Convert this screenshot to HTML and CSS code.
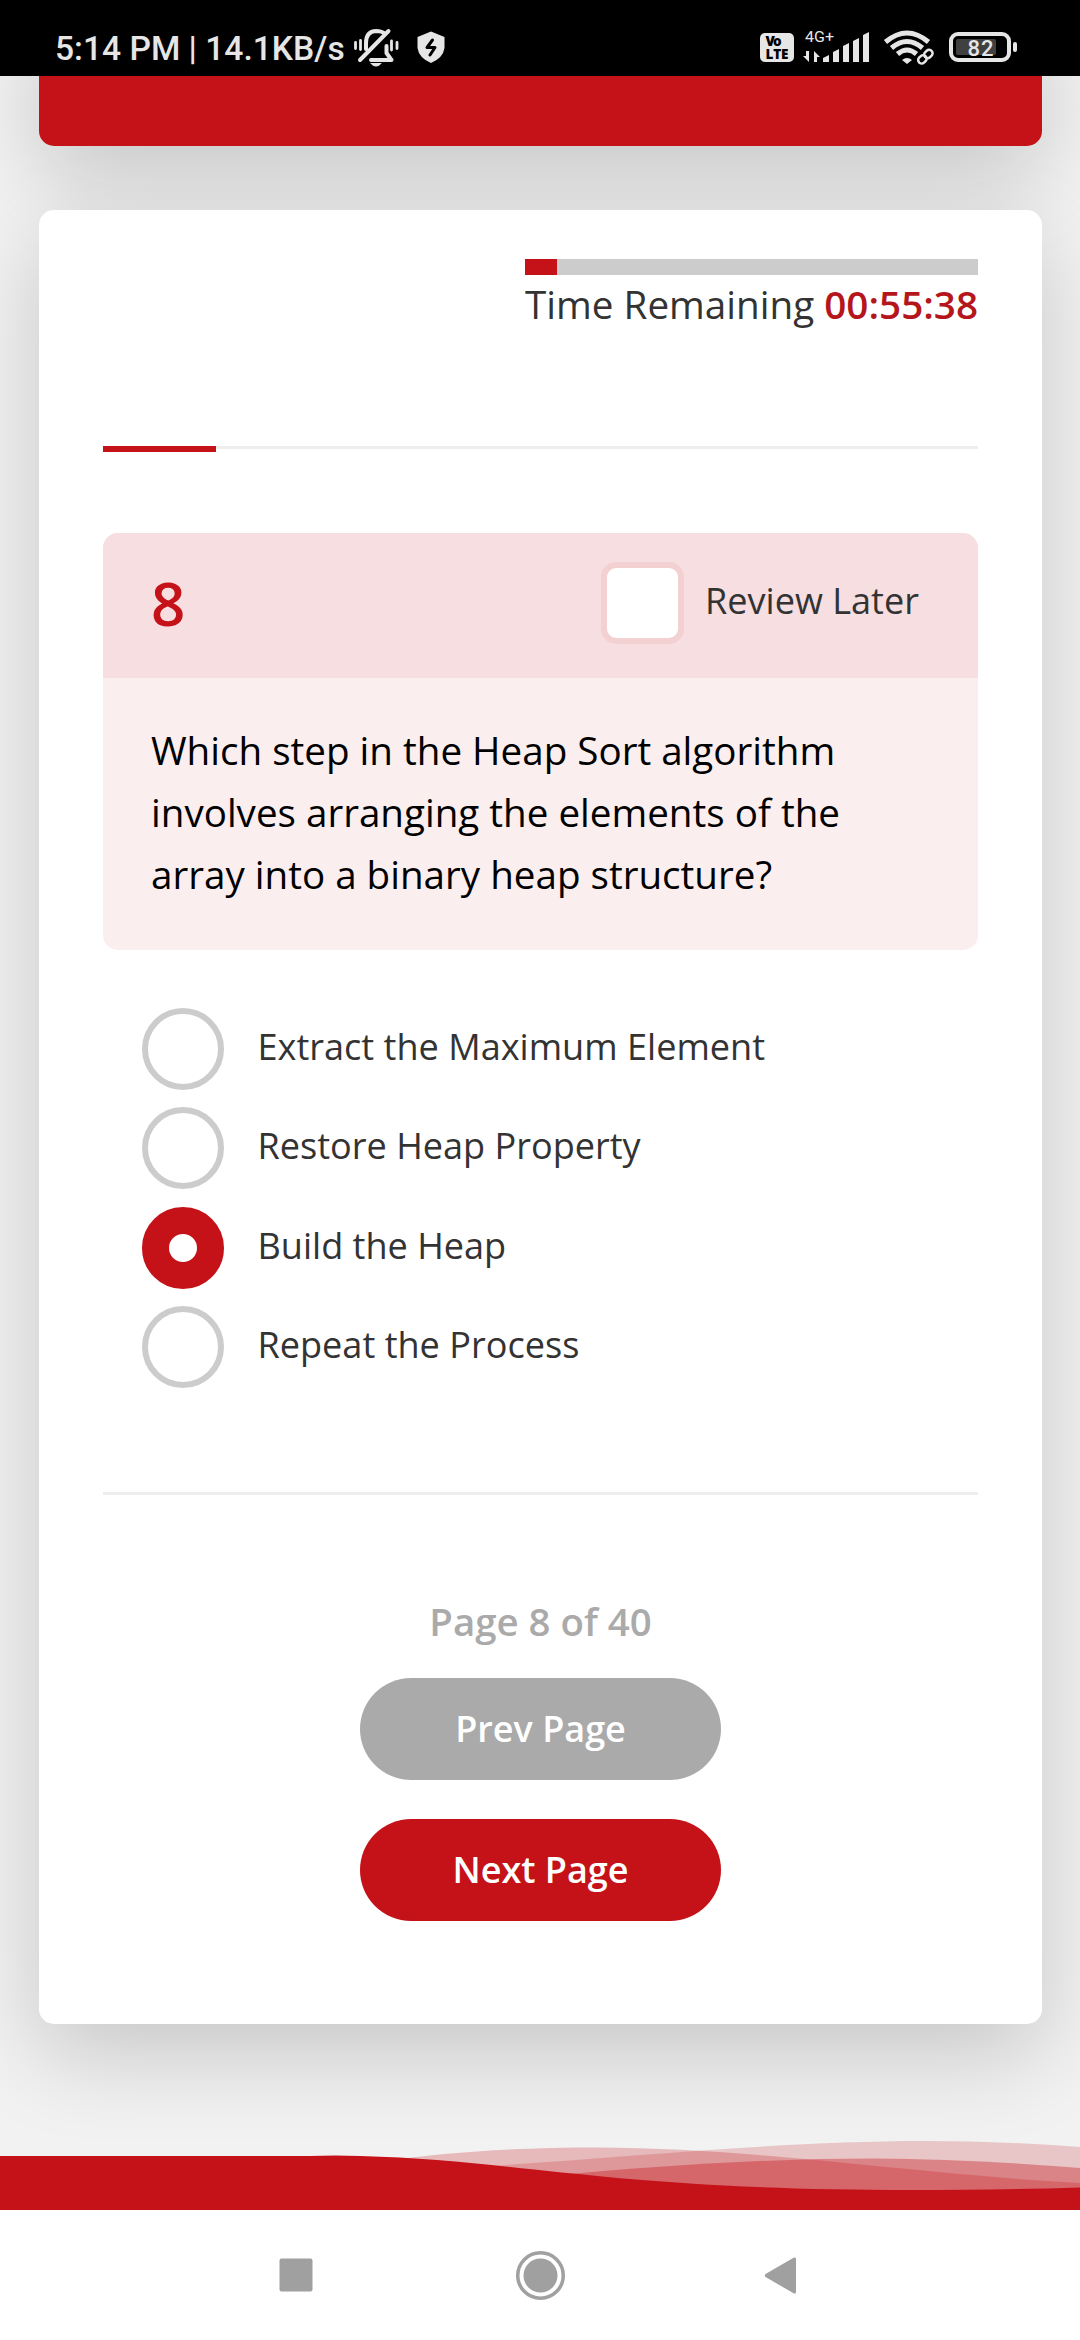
FILE: index.html
```html
<!DOCTYPE html>
<html lang="en">
<head>
<meta charset="utf-8">
<title>Quiz</title>
<link rel="stylesheet" href="styles.css">
</head>
<body>
<div class="status">
  <span class="clock">5:14 PM | 14.1KB/s</span>
  <svg class="status-left" width="96" height="76" viewBox="350 0 96 76" fill="none" stroke="#e6e6e6" stroke-width="4" stroke-linecap="round" stroke-linejoin="round">
    <path d="M366 49V43Q366 31.500 376 31Q382 31 385 34M360 60L388.500 31M371 60H391.500L386.500 53V46"/>
    <path d="M355.500 42.500v6M360.500 40.500v9M391.500 41v9M397 42.500v6" stroke-width="2.800"/>
    <path d="M370 63H382Q376 70 370 63Z" fill="#e6e6e6" stroke="none"/>
    <path d="M431 31.500L444.500 37V48Q443 58 431 63Q419 58 417.500 48V37Z" fill="#e6e6e6" stroke="none"/>
    <path d="M432.500 40L427 47.500H435L430 55" stroke="#000" stroke-width="3"/>
  </svg>
  <svg class="status-right" width="264" height="76" viewBox="756 0 264 76" fill="#e6e6e6">
    <rect x="760" y="33" width="34" height="29" rx="5"/>
    <text class="volte" fill="#000"><tspan x="765.500" y="46" textLength="16">Vo</tspan><tspan x="765.500" y="58.500" textLength="23">LTE</tspan></text>
    <text class="net" x="805" y="42" textLength="29" lengthAdjust="spacingAndGlyphs">4G+</text>
    <path d="M806 51h3v11l-6-6h3zM811 62h3V51l6 6h-3v5zM823 62v-4l6-3v7zM833 62V52l6-3v13zM843 62V46l6-3v19zM853 62V41l6-3v24zM863 62V35l6-3v30z"/>
    <g fill="none" stroke="#e6e6e6"><path d="M885.500 42Q907 24 928.500 42" stroke-width="5"/><path d="M891.500 48Q907 35 922.500 48M897.500 54Q907 46 916.500 54" stroke-width="5"/></g>
    <path d="M902 60Q907 56 912 60L907 64Z"/>
    <g fill="none" stroke="#e6e6e6" stroke-width="2.500" transform="rotate(-42 925 57)"><rect x="917" y="53.500" width="9" height="7" rx="3.500"/><rect x="925" y="53.500" width="9" height="7" rx="3.500"/></g>
    <rect x="951" y="34" width="58" height="26" rx="7" fill="none" stroke="#e6e6e6" stroke-width="4"/>
    <rect x="956" y="39" width="40" height="16" rx="2" fill="#404040"/>
    <rect x="1013" y="42" width="4" height="10" rx="2"/>
    <text class="level" x="967.500" y="55.500" textLength="26">82</text>
  </svg>
</div>
<main class="page">
  <div class="banner"></div>
  <section class="card">
    <div class="timer">
      <div class="bar"><div class="fill"></div></div>
      <div class="remaining">Time Remaining <b>00:55:38</b></div>
    </div>
    <div class="progress"><div class="done"></div></div>
    <article class="question">
      <header class="head">
        <span class="number">8</span>
        <span class="box"></span>
        <span class="review">Review Later</span>
      </header>
      <p class="text">Which step in the Heap Sort algorithm<br>involves arranging the elements of the<br>array into a binary heap structure?</p>
    </article>
    <ul class="options">
      <li><i class="radio"></i><span>Extract the Maximum Element</span></li>
      <li><i class="radio"></i><span>Restore Heap Property</span></li>
      <li><i class="radio on"></i><span>Build the Heap</span></li>
      <li><i class="radio"></i><span>Repeat the Process</span></li>
    </ul>
    <div class="rule"></div>
    <div class="pager">
      <div class="count">Page 8 of 40</div>
      <div class="btn">Prev Page</div>
      <div class="btn next">Next Page</div>
    </div>
  </section>
  <svg class="wave" width="1080" height="80" viewBox="0 2130 1080 80">
    <g fill="#c41218">
      <path fill-opacity=".25" d="M380 2162C450 2151 530 2147.500 595 2147.500C760 2148 900 2173 1080 2183V2210H380Z"/>
      <path fill-opacity=".2" d="M460 2168C620 2158 780 2141 925 2141Q1000 2141 1080 2147V2210H460Z"/>
      <path fill-opacity=".36" d="M560 2175C670 2165 770 2158.500 875 2158.500Q970 2159 1080 2168V2210H560Z"/>
      <path d="M0 2156H310Q335 2155 360 2156C520 2160 610 2190 910 2190Q1000 2190 1080 2187.500V2210H0Z"/>
    </g>
  </svg>
</main>
<nav class="nav">
  <svg width="1080" height="130" viewBox="0 2210 1080 130" fill="#a0a0a0">
    <rect x="279.500" y="2258.500" width="33" height="33" rx="2"/>
    <circle cx="540.500" cy="2275.500" r="17"/>
    <circle cx="540.500" cy="2275.500" r="22.750" fill="none" stroke="#a0a0a0" stroke-width="3.500"/>
    <path d="M794 2257.500L765.500 2274Q764 2275.500 765.500 2277L794 2293.500Q796 2294 796 2292V2259Q796 2257 794 2257.500Z"/>
  </svg>
</nav>
</body>
</html>
```

FILE: styles.css
```css
* { box-sizing: border-box; }
body { margin: 0; width: 1080px; height: 2340px; overflow: hidden; display: flex; flex-direction: column; background: #f2f2f2; font-family: "Open Sans", sans-serif; color: #333; }
svg { display: block; flex: none; }
.status { height: 76px; flex: none; background: #000; display: flex; position: relative; z-index: 1; padding-left: 55px; }
.clock { width: 295px; font: 500 33.6px/97px Roboto, sans-serif; color: #e6e6e6; white-space: nowrap; }
.status-right { margin-left: 310px; }
.volte { font: 800 13.5px "Open Sans", sans-serif; }
.net { font: 400 15.5px Roboto, sans-serif; }
.level { font: 500 22px Roboto, sans-serif; }
.page { height: 2134px; flex: none; display: flex; flex-direction: column; padding-left: 39px; overflow: hidden; }
.banner { width: 1003px; height: 134px; margin-top: -64px; flex: none; background: #c41218; border-radius: 15px; box-shadow: 0 30px 90px rgba(0, 0, 0, .18); }
.card { width: 1003px; height: 1814px; flex: none; margin-top: 64px; padding: 49px 64px 0; background: #fff; border-radius: 15px; box-shadow: 0 30px 90px rgba(0, 0, 0, .18); }
.timer { width: 453px; height: 187px; margin-left: auto; }
.bar { height: 16px; background: #ccc; }
.fill { width: 32px; height: 16px; background: #c41218; }
.remaining { font-size: 38.65px; line-height: 58px; white-space: nowrap; }
.remaining b { font-weight: 600; color: #b5161b; }
.progress { height: 3px; background: #eee; }
.done { width: 113px; height: 6px; background: #c41218; }
.question { height: 417px; margin-top: 84px; border-radius: 15px; overflow: hidden; background: #faeeee; }
.head { height: 145px; background: #f6dee1; display: flex; align-items: flex-start; padding: 29px 0 0 48px; }
.number { width: 450px; font-size: 60px; font-weight: 600; line-height: 82px; color: #c41218; }
.box { width: 83px; height: 82px; background: #fff; border: 6px solid #f3d0d2; border-radius: 15px; }
.review { margin-left: 21px; font-size: 36.1px; line-height: 76px; }
.text { margin: 41px 0 0 48px; font-size: 38.6px; line-height: 62px; color: #000; white-space: nowrap; }
.options { list-style: none; margin: 58px 0 0; padding: 0 0 0 39px; }
.options li { display: flex; height: 99.3px; font-size: 36.1px; line-height: 76px; }
.radio { width: 82px; height: 82px; margin-right: 33.5px; border: 6px solid #ccc; border-radius: 50%; background: #fff; }
.on { border: 27px solid #c41218; }
.rule { height: 3px; margin-top: 86.8px; background: #eee; }
.pager { display: flex; flex-direction: column; align-items: center; margin-top: 97px; font-weight: 600; }
.count { font-size: 38.4px; line-height: 58px; height: 86px; color: #aaa; }
.btn { width: 361px; height: 102px; border-radius: 51px; background: #aaa; color: #fff; font-size: 36px; line-height: 102px; text-align: center; margin-bottom: 39px; }
.next { background: #c41218; }
.wave { margin: 106px 0 0 -39px; }
.nav { height: 130px; flex: none; background: #fff; }
```
